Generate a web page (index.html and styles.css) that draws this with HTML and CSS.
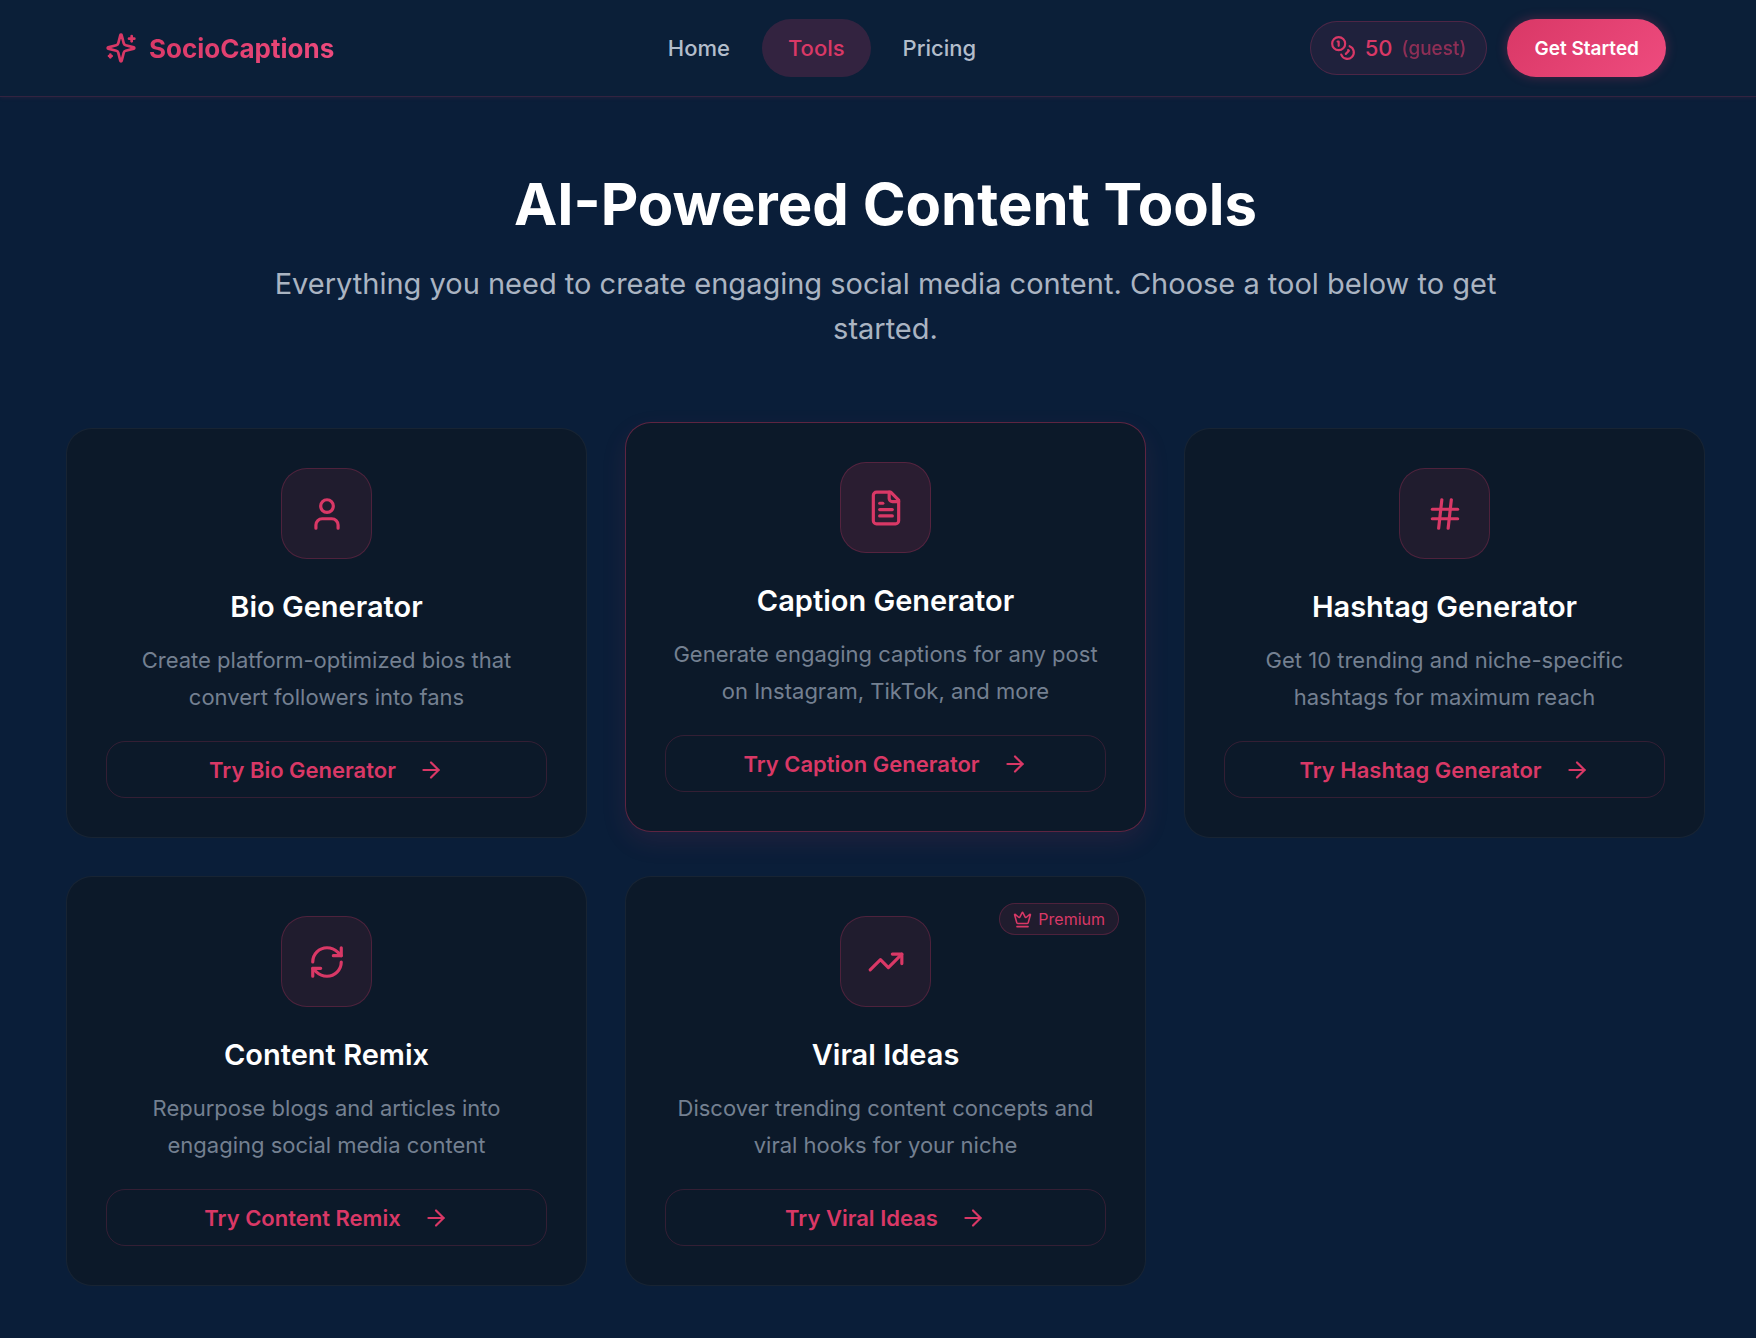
FILE: index.html
```
<!DOCTYPE html>
<html lang="en">
<head>
    <meta charset="utf-8">
    <meta name="viewport" content="width=device-width, initial-scale=1">
    <title>AI-Powered Content Tools - SocioCaptions</title>
    <link rel="stylesheet" href="styles.css">
</head>
<body>
<!-- header -->
<header class="header">
    <a href="#" class="logo">
        <svg class="icon logo-icon" viewBox="0 0 24 24"><path d="M9.937 15.5A2 2 0 0 0 8.5 14.063l-6.135-1.582a.5.5 0 0 1 0-.962L8.5 9.936A2 2 0 0 0 9.937 8.5l1.582-6.135a.5.5 0 0 1 .963 0L14.063 8.5A2 2 0 0 0 15.5 9.937l6.135 1.581a.5.5 0 0 1 0 .964L15.5 14.063a2 2 0 0 0-1.437 1.437l-1.582 6.135a.5.5 0 0 1-.963 0z"/><path d="M20 3v4"/><path d="M22 5h-4"/><path d="M4 17v2"/><path d="M5 18H3"/></svg>
        <span class="logo-text">SocioCaptions</span>
    </a>
    <nav class="nav">
        <a href="#" class="nav-link">Home</a>
        <a href="#" class="nav-link active">Tools</a>
        <a href="#" class="nav-link">Pricing</a>
    </nav>
    <div class="header-actions">
        <div class="credits">
            <svg class="icon credits-icon" viewBox="0 0 24 24"><circle cx="8" cy="8" r="6"/><path d="M18.09 10.37A6 6 0 1 1 10.34 18"/><path d="M7 6h1v4"/><path d="m16.71 13.88.7.71-2.82 2.82"/></svg>
            <span>50</span>
            <span class="credits-guest">(guest)</span>
        </div>
        <button type="button" class="btn-start">Get Started</button>
    </div>
</header>

<main class="main">
    <div class="hero">
        <h1>AI-Powered Content Tools</h1>
        <p>Everything you need to create engaging social media content. Choose a tool below to get started.</p>
    </div>

    <!-- tools -->
    <div class="tools">
        <div class="card">
            <div class="card-icon">
                <svg class="icon" viewBox="0 0 24 24"><path d="M19 21v-2a4 4 0 0 0-4-4H9a4 4 0 0 0-4 4v2"/><circle cx="12" cy="7" r="4"/></svg>
            </div>
            <h2>Bio Generator</h2>
            <p>Create platform-optimized bios that convert followers into fans</p>
            <a href="#" class="card-btn">Try Bio Generator
                <svg class="icon" viewBox="0 0 24 24"><path d="M5 12h14"/><path d="m12 5 7 7-7 7"/></svg>
            </a>
        </div>
        <div class="card active">
            <div class="card-icon">
                <svg class="icon" viewBox="0 0 24 24"><path d="M15 2H6a2 2 0 0 0-2 2v16a2 2 0 0 0 2 2h12a2 2 0 0 0 2-2V7Z"/><path d="M14 2v4a2 2 0 0 0 2 2h4"/><path d="M10 9H8"/><path d="M16 13H8"/><path d="M16 17H8"/></svg>
            </div>
            <h2>Caption Generator</h2>
            <p>Generate engaging captions for any post on Instagram, TikTok, and more</p>
            <a href="#" class="card-btn">Try Caption Generator
                <svg class="icon" viewBox="0 0 24 24"><path d="M5 12h14"/><path d="m12 5 7 7-7 7"/></svg>
            </a>
        </div>
        <div class="card">
            <div class="card-icon">
                <svg class="icon" viewBox="0 0 24 24"><path d="M4 9h16"/><path d="M4 15h16"/><path d="M10 3 8 21"/><path d="m16 3-2 18"/></svg>
            </div>
            <h2>Hashtag Generator</h2>
            <p>Get 10 trending and niche-specific hashtags for maximum reach</p>
            <a href="#" class="card-btn">Try Hashtag Generator
                <svg class="icon" viewBox="0 0 24 24"><path d="M5 12h14"/><path d="m12 5 7 7-7 7"/></svg>
            </a>
        </div>
        <div class="card">
            <div class="card-icon">
                <svg class="icon" viewBox="0 0 24 24"><path d="M3 12a9 9 0 0 1 9-9 9.75 9.75 0 0 1 6.74 2.74L21 8"/><path d="M21 3v5h-5"/><path d="M21 12a9 9 0 0 1-9 9 9.75 9.75 0 0 1-6.74-2.74L3 16"/><path d="M8 16H3v5"/></svg>
            </div>
            <h2>Content Remix</h2>
            <p>Repurpose blogs and articles into engaging social media content</p>
            <a href="#" class="card-btn">Try Content Remix
                <svg class="icon" viewBox="0 0 24 24"><path d="M5 12h14"/><path d="m12 5 7 7-7 7"/></svg>
            </a>
        </div>
        <div class="card">
            <span class="badge">
                <svg class="icon" viewBox="0 0 24 24"><path d="M11.562 3.266a.5.5 0 0 1 .876 0L15.39 8.87a1 1 0 0 0 1.516.294L21.183 5.5a.5.5 0 0 1 .798.519l-2.834 10.246a1 1 0 0 1-.956.734H5.81a1 1 0 0 1-.957-.734L2.02 6.02a.5.5 0 0 1 .798-.519l4.276 3.664a1 1 0 0 0 1.516-.294z"/><path d="M5 21h14"/></svg>
                Premium
            </span>
            <div class="card-icon">
                <svg class="icon" viewBox="0 0 24 24"><path d="M22 7 13.5 15.5 8.5 10.5 2 17"/><path d="M16 7h6v6"/></svg>
            </div>
            <h2>Viral Ideas</h2>
            <p>Discover trending content concepts and viral hooks for your niche</p>
            <a href="#" class="card-btn">Try Viral Ideas
                <svg class="icon" viewBox="0 0 24 24"><path d="M5 12h14"/><path d="m12 5 7 7-7 7"/></svg>
            </a>
        </div>
    </div>
</main>
</body>
</html>
```
FILE: styles.css
```
:root {
    --pink: #d93866;
    --pink-light: #ee4b7e;
    --navy: #0a1e39;
    --card: #0c1929;
}

* { box-sizing: border-box; }

body {
    margin: 0;
    min-height: 100vh;
    background: var(--navy);
    color: #fff;
    font-family: Inter, "Liberation Sans", sans-serif;
    font-size: 22px;
}

a { color: inherit; text-decoration: none; }

.icon {
    display: block;
    flex: none;
    fill: none;
    stroke: currentColor;
    stroke-width: 2;
    stroke-linecap: round;
    stroke-linejoin: round;
}

/* header */
.header {
    display: flex;
    align-items: center;
    justify-content: space-between;
    height: 97px;
    padding: 0 90px 0 105px;
    background: #0b1f38;
    border-bottom: 1px solid rgba(217, 56, 102, .2);
    box-shadow: 0 1px 4px rgba(217, 56, 102, .1);
}
.logo { display: flex; align-items: center; gap: 12px; color: var(--pink); }
.logo-icon { width: 32px; height: 32px; }
.logo-text {
    font-size: 26px;
    font-weight: 700;
    background: linear-gradient(135deg, var(--pink), var(--pink-light));
    -webkit-background-clip: text;
    background-clip: text;
    color: transparent;
}

.nav { display: flex; gap: 6px; }
.nav-link {
    padding: 0 26px;
    line-height: 58px;
    border-radius: 29px;
    color: #b3bdcb;
    font-weight: 500;
}
.nav-link.active { background: rgba(217, 56, 102, .2); color: var(--pink); }

.header-actions { display: flex; align-items: center; gap: 20px; }
.credits {
    display: flex;
    align-items: center;
    gap: 9px;
    height: 54px;
    padding: 0 20px 0 19px;
    border: 1px solid rgba(217, 56, 102, .25);
    border-radius: 27px;
    background: rgba(217, 56, 102, .1);
    color: var(--pink);
    font-weight: 500;
}
.credits-icon { width: 26px; height: 26px; }
.credits-guest { font-size: 19px; opacity: .6; }
.btn-start {
    height: 58px;
    padding: 0 27px;
    border: 0;
    border-radius: 29px;
    background: linear-gradient(135deg, var(--pink), var(--pink-light));
    box-shadow: 0 0 12px rgba(217, 56, 102, .3);
    color: #fff;
    font-family: inherit;
    font-size: 19px;
    font-weight: 600;
    cursor: pointer;
}

/* hero */
.main { padding: 71px 51px 52px 66px; }
.hero { max-width: 1280px; margin: 0 auto 77px; text-align: center; }
.hero h1 { margin: 0 0 21px; font-size: 58px; font-weight: 700; line-height: 72px; }
.hero p { margin: 0; color: #aab4c2; font-size: 29px; line-height: 45px; }

/* tools */
.tools { display: grid; grid-template-columns: repeat(3, 1fr); gap: 38px; }
.card {
    position: relative;
    display: flex;
    flex-direction: column;
    align-items: center;
    padding: 39px;
    border: 1px solid rgba(255, 255, 255, .05);
    border-radius: 26px;
    background: var(--card);
    text-align: center;
}
.card.active {
    border-color: rgba(217, 56, 102, .4);
    box-shadow: 0 10px 26px rgba(217, 56, 102, .1);
    transform: translateY(-6px);
}
.card-icon {
    display: flex;
    align-items: center;
    justify-content: center;
    width: 91px;
    height: 91px;
    margin-bottom: 29px;
    border: 1px solid rgba(217, 56, 102, .25);
    border-radius: 26px;
    background: rgba(217, 56, 102, .1);
    color: var(--pink);
}
.card.active .card-icon { background: rgba(217, 56, 102, .15); }
.card-icon .icon { width: 38px; height: 38px; }
.card h2 { margin: 0 0 16px; font-size: 29px; font-weight: 600; line-height: 38px; }
.card p { margin: 0 0 25px; color: #748091; line-height: 37px; }
.card-btn {
    display: flex;
    align-items: center;
    justify-content: center;
    gap: 22px;
    width: 100%;
    height: 57px;
    border: 1px solid rgba(217, 56, 102, .2);
    border-radius: 19px;
    color: var(--pink);
    font-weight: 600;
}
.card-btn .icon { width: 26px; height: 26px; }

.badge {
    position: absolute;
    top: 26px;
    right: 26px;
    display: flex;
    align-items: center;
    gap: 6px;
    height: 32px;
    padding: 0 13px;
    border: 1px solid rgba(217, 56, 102, .25);
    border-radius: 16px;
    background: rgba(217, 56, 102, .1);
    color: var(--pink);
    font-size: 16px;
}
.badge .icon { width: 19px; height: 19px; }
```
